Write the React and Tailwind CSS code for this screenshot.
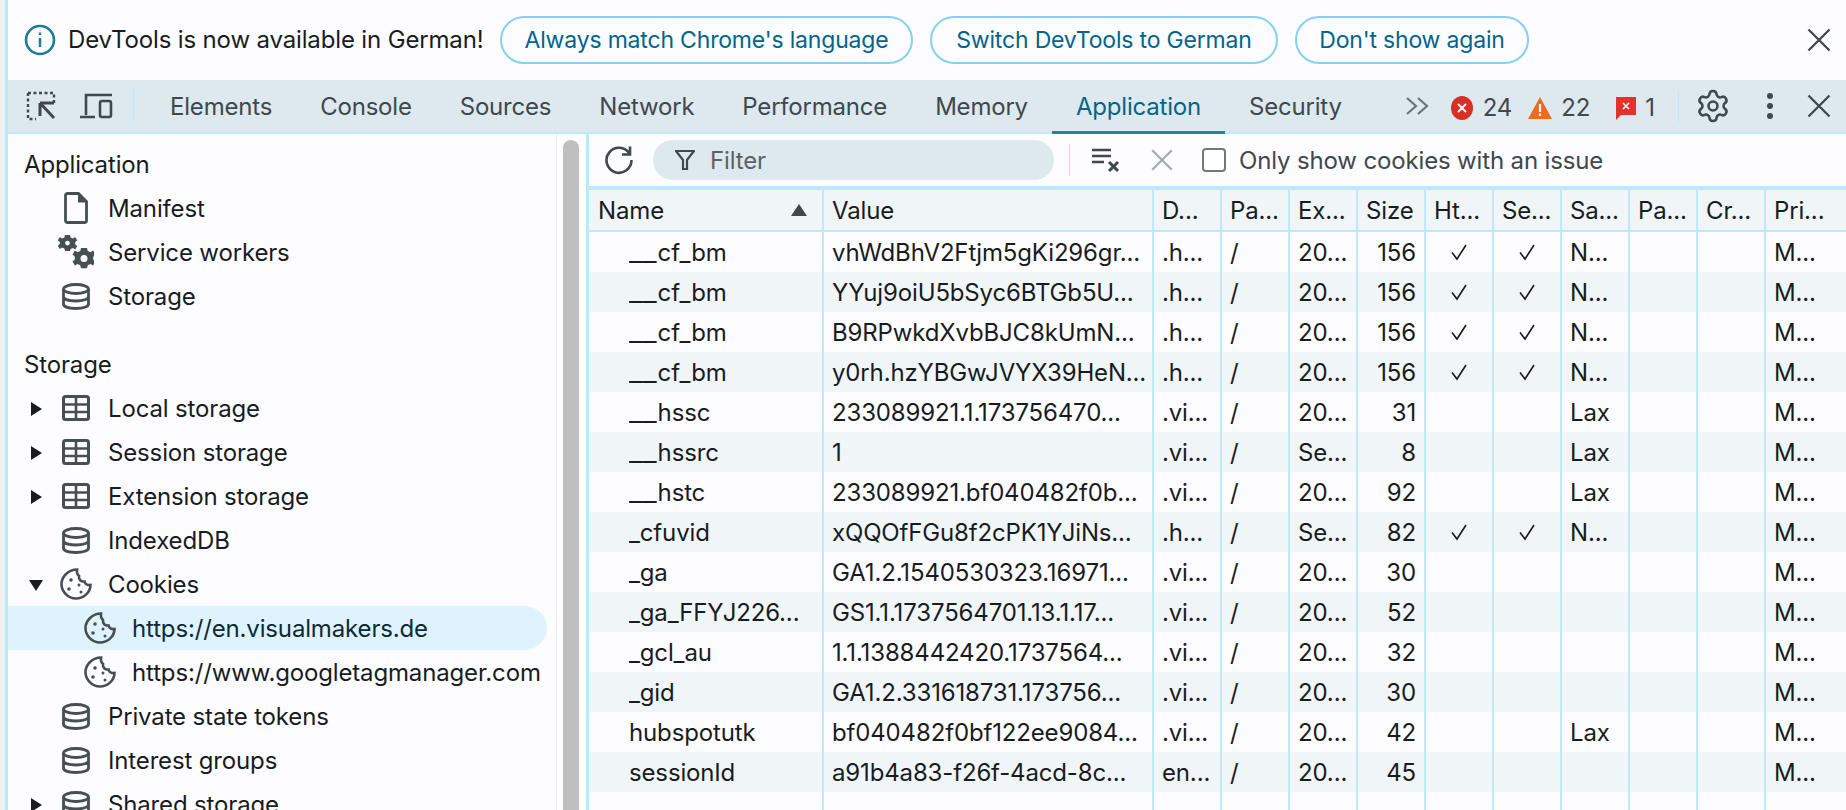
import { Settings } from "lucide-react";

const tabs = ["Elements", "Console", "Sources", "Network", "Performance", "Memory", "Application", "Security"];

const rows = [
    ["__cf_bm", "vhWdBhV2Ftjm5gKi296gr...", ".h...", "20...", "156", true, "N..."],
    ["__cf_bm", "YYuj9oiU5bSyc6BTGb5U...", ".h...", "20...", "156", true, "N..."],
    ["__cf_bm", "B9RPwkdXvbBJC8kUmN...", ".h...", "20...", "156", true, "N..."],
    ["__cf_bm", "y0rh.hzYBGwJVYX39HeN...", ".h...", "20...", "156", true, "N..."],
    ["__hssc", "233089921.1.173756470...", ".vi...", "20...", "31", false, "Lax"],
    ["__hssrc", "1", ".vi...", "Se...", "8", false, "Lax"],
    ["__hstc", "233089921.bf040482f0b...", ".vi...", "20...", "92", false, "Lax"],
    ["_cfuvid", "xQQOfFGu8f2cPK1YJiNs...", ".h...", "Se...", "82", true, "N..."],
    ["_ga", "GA1.2.1540530323.16971...", ".vi...", "20...", "30", false, ""],
    ["_ga_FFYJ226...", "GS1.1.1737564701.13.1.17...", ".vi...", "20...", "52", false, ""],
    ["_gcl_au", "1.1.1388442420.1737564...", ".vi...", "20...", "32", false, ""],
    ["_gid", "GA1.2.331618731.173756...", ".vi...", "20...", "30", false, ""],
    ["hubspotutk", "bf040482f0bf122ee9084...", ".vi...", "20...", "42", false, "Lax"],
    ["sessionId", "a91b4a83-f26f-4acd-8c...", "en...", "20...", "45", false, ""],
];

const gridCols = "grid grid-cols-[235px_330px_68px_68px_68px_68px_68px_68px_68px_68px_68px_1fr]";
const cell = "border-r-2 border-[#bee8fd] px-2 overflow-hidden whitespace-nowrap leading-[42px]";

/* ICONS */
const Close = ({ className }) => (
    <svg viewBox="0 0 24 24" className={className} fill="none" stroke="currentColor" strokeWidth="2">
        <path d="M3 3 21 21M21 3 3 21" />
    </svg>
);

const Caret = ({ open }) => (
    <svg viewBox="0 0 16 16" className="w-4 h-4 text-[#191c1e]" fill="currentColor">
        {open ? <path d="M1 3h14L8 14z" /> : <path d="M3 1l11 7-11 7z" />}
    </svg>
);

const Db = () => (
    <svg viewBox="0 0 28 27" className="w-7 h-[27px] text-[#474f53]" fill="none" stroke="currentColor" strokeWidth="2.8">
        <ellipse cx="14" cy="6" rx="12.500" ry="4.500" />
        <path d="M1.500 6v15c0 2.800 5.500 4.500 12.500 4.500s12.500-1.700 12.500-4.500V6M1.500 13.500c0 2.800 5.500 4.500 12.500 4.500s12.500-1.700 12.500-4.500" />
    </svg>
);

const Grid = () => (
    <svg viewBox="0 0 28 26" className="w-7 h-[26px] text-[#474f53]" fill="none" stroke="currentColor" strokeWidth="3">
        <rect x="1.500" y="1.500" width="25" height="23" rx="2" />
        <path d="M1.500 9.500h25M1.500 17h25M14 1.500v23" strokeWidth="2.600" />
    </svg>
);

const Cookie = () => (
    <svg viewBox="0 0 32 32" className="w-8 h-8 shrink-0 text-[#474f53]" fill="none" stroke="currentColor" strokeWidth="2.600">
        <path d="M17 1.500C8.500 1.500 1.500 8.500 1.500 16s6.500 14.500 14.500 14.500S30.500 24 30.500 17c-3 .5-5.500-1-6-3.500-3.500.5-6-2-5.500-5.500-1.500-1.500-2.500-4-2-6.500z" />
        <circle cx="11" cy="12" r="1.800" fill="currentColor" stroke="none" />
        <circle cx="9" cy="21" r="1.800" fill="currentColor" stroke="none" />
        <circle cx="19" cy="17" r="1.500" fill="currentColor" stroke="none" />
        <circle cx="21" cy="24" r="1.500" fill="currentColor" stroke="none" />
    </svg>
);

const ManifestIcon = () => (
    <svg viewBox="0 0 24 32" className="w-6 h-8 text-[#474f53]" fill="none" stroke="currentColor" strokeWidth="2.800">
        <path d="M1.500 3.500a2 2 0 0 1 2-2h11l8 8v19a2 2 0 0 1-2 2h-17a2 2 0 0 1-2-2z" />
        <path d="M14 1.500h1l7.500 8v1H14z" fill="currentColor" stroke="none" />
    </svg>
);

const GearsIcon = () => (
    <svg viewBox="0 0 36 34" className="w-9 h-[34px] shrink-0 text-[#474f53]" fill="currentColor">
        <path
            fillRule="evenodd"
            d="M7 0h5l.6 2.400 2.400 1 2.200-1.400 2 3.400-2 1.600v2.400l2 1.600-2 3.400-2.200-1.400-2.400 1L12 16H7l-.6-2.400-2.400-1-2.200 1.400-2-3.400 2-1.600V7l-2-1.600 2-3.400L4 3.400l2.400-1zM9.500 5.700a2.400 2.400 0 1 0 0 4.800 2.400 2.400 0 0 0 0-4.800z"
        />
        <path
            fillRule="evenodd"
            d="M23 13h6l.7 3 2.800 1.200 2.600-1.600 2.400 4-2.300 2.100v2.800l2.300 2.100-2.400 4-2.600-1.600-2.800 1.200-.7 3h-6l-.7-3-2.800-1.200-2.600 1.600-2.400-4 2.300-2.100v-2.800l-2.300-2.100 2.400-4 2.600 1.600 2.800-1.200zM26 20a3.500 3.500 0 1 0 0 7 3.500 3.500 0 0 0 0-7z"
        />
    </svg>
);

const CheckMark = () => (
    <svg viewBox="0 0 18 18" className="w-[18px] h-[18px] text-[#191c1e] mx-auto mt-[11px]" fill="none" stroke="currentColor" strokeWidth="1.600">
        <path d="M2 9.500 7 16 16 2" />
    </svg>
);

/* SIDEBAR ROW */
const SideRow = ({ caret, icon, label, indent, selected }) => (
    <div
        className={`flex items-center h-11 shrink-0 ${selected ? "bg-[#dff3fe] rounded-r-full text-[#0f2a37]" : ""} ${indent ? "pl-[76px]" : "pl-0"}`}
    >
        {!indent && <div className="w-[54px] pl-[20px] pt-px">{caret !== undefined && <Caret open={caret} />}</div>}
        <div className={`flex justify-center ${indent ? "w-8" : "w-7"}`}>{icon}</div>
        <span className={`whitespace-nowrap pt-px ${indent ? "ml-[16px]" : "ml-[18px]"}`}>{label}</span>
    </div>
);

const Pill = ({ children, width }) => (
    <button className={`h-[48px] rounded-full border-2 border-[#85d0f5] text-[#00658a] text-[23px] tracking-[-0.18px] text-center ${width}`}>
        {children}
    </button>
);

// the leading double underscore runs wider in the original font
const CookieName = ({ name }) =>
    name.startsWith("__") ? (
        <>
            <span className="inline-block origin-left scale-x-[1.27] mr-[7px]">__</span>
            {name.slice(2)}
        </>
    ) : (
        name
    );

export default function App() {
    return (
        <div className="w-[1846px] h-[810px] overflow-hidden flex bg-[#f0f0ee] pl-[5px] font-['Inter',sans-serif] text-[24px] tracking-[-0.15px] text-[#191c1e]">
            <div className="flex-1 flex flex-col border-l-[3px] border-[#bee8fd] bg-[#fdfcff] min-w-0">
                {/* INFOBAR */}
                <div className="h-20 shrink-0 flex items-center">
                    <svg viewBox="0 0 32 32" className="w-8 h-8 ml-4 text-[#1f7a9c]" fill="none" stroke="currentColor" strokeWidth="2.600">
                        <circle cx="16" cy="16" r="14" />
                        <path d="M16 14v9M16 8.500v2.500" strokeWidth="2.400" />
                    </svg>
                    <span className="ml-[12px] w-[432px] whitespace-nowrap pb-px">DevTools is now available in German!</span>
                    <div className="flex gap-[17px]">
                        <Pill width="w-[413px]">Always match Chrome's language</Pill>
                        <Pill width="w-[348px]">Switch DevTools to German</Pill>
                        <Pill width="w-[234px]">Don't show again</Pill>
                    </div>
                    <Close className="w-7 h-7 ml-[276px] text-[#40484c]" />
                </div>

                {/* TABS */}
                <div className="h-[54px] shrink-0 flex items-center bg-[#dde9ee] border-b-2 border-[#bee8fd] text-[#40484c]">
                    <svg viewBox="0 0 30 30" className="w-[30px] h-[30px] ml-[18px]" fill="none" stroke="currentColor" strokeWidth="2.400">
                        <path d="M2 2h26v10M2 2v26h8" strokeDasharray="3 2.500" />
                        <path d="M14 12h14M14 12v13M14.500 12.500 28 27" strokeWidth="3" />
                    </svg>
                    <svg viewBox="0 0 34 26" className="w-[34px] h-[26px] ml-[24px]" fill="none" stroke="currentColor" strokeWidth="2.600">
                        <path d="M6 22V2h26M0 24h15" />
                        <rect x="20" y="8" width="11" height="16" rx="2" />
                    </svg>
                    <div className="w-px h-8 bg-[#bee8fd] ml-[19px]" />
                    <div className="flex h-full ml-[12px]">
                        {tabs.map((t) => (
                            <div
                                key={t}
                                className={`h-[54px] px-6 leading-[54px] tracking-[-0.2px] whitespace-nowrap ${t === "Application" ? "text-[#00658a] border-b-[3px] border-[#26809f]" : ""}`}
                            >
                                {t}
                            </div>
                        ))}
                    </div>
                    <svg viewBox="0 0 24 20" className="w-6 h-5 ml-[39px] text-[#6c7478]" fill="none" stroke="currentColor" strokeWidth="2.200">
                        <path d="M2 2l9 8-9 8M13 2l9 8-9 8" />
                    </svg>
                    <div className="flex items-center pt-1">
                        <svg viewBox="0 0 22 24" className="w-[22px] h-6 ml-[22px]">
                            <ellipse cx="11" cy="12" rx="11" ry="12" fill="#d93025" />
                            <path d="M7 8l8 8M15 8l-8 8" stroke="#fff" strokeWidth="1.800" />
                        </svg>
                        <span className="ml-[10px]">24</span>
                        <svg viewBox="0 0 24 22" className="w-6 h-[22px] ml-[16px]">
                            <path d="M12 0 24 22H0z" fill="#ed6a22" />
                            <path d="M12 7v8M12 16.500v2.500" stroke="#fff" strokeWidth="2.200" />
                        </svg>
                        <span className="ml-[9px]">22</span>
                        <svg viewBox="0 0 22 24" className="w-[22px] h-6 ml-[25px]">
                            <path d="M1 1h20v18H6l-5 5z" fill="#e2322d" />
                            <path d="M8 7l6 6M14 7l-6 6" stroke="#fff" strokeWidth="1.600" />
                        </svg>
                        <span className="ml-[8px]">1</span>
                    </div>
                    <div className="w-px h-8 bg-[#bee8fd] ml-[23px]" />
                    <Settings className="w-9 h-9 ml-[16px]" strokeWidth={1.700} />
                    <svg viewBox="0 0 8 28" className="w-2 h-7 ml-[35px]" fill="currentColor">
                        <circle cx="4" cy="4" r="3" />
                        <circle cx="4" cy="14" r="3" />
                        <circle cx="4" cy="24" r="3" />
                    </svg>
                    <Close className="w-7 h-7 ml-[31px]" />
                </div>

                <div className="flex-1 flex min-h-0">
                    {/* SIDEBAR */}
                    <div className="w-[549px] shrink-0 pt-[8px] overflow-hidden border-r border-[#e9e9e9] pr-[9px]">
                        <div className="h-11 flex items-center pl-4 pt-px">Application</div>
                        <SideRow icon={<ManifestIcon />} label="Manifest" />
                        <SideRow icon={<GearsIcon />} label="Service workers" />
                        <SideRow icon={<Db />} label="Storage" />
                        <div className="h-11 mt-[24px] flex items-center pl-4 pt-px">Storage</div>
                        <SideRow caret={false} icon={<Grid />} label="Local storage" />
                        <SideRow caret={false} icon={<Grid />} label="Session storage" />
                        <SideRow caret={false} icon={<Grid />} label="Extension storage" />
                        <SideRow icon={<Db />} label="IndexedDB" />
                        <SideRow caret={true} icon={<Cookie />} label="Cookies" />
                        <SideRow indent selected icon={<Cookie />} label="https://en.visualmakers.de" />
                        <SideRow indent icon={<Cookie />} label="https://www.googletagmanager.com" />
                        <SideRow icon={<Db />} label="Private state tokens" />
                        <SideRow icon={<Db />} label="Interest groups" />
                        <SideRow caret={false} icon={<Db />} label="Shared storage" />
                    </div>

                    {/* SCROLLBAR */}
                    <div className="w-[29px] shrink-0 pt-[6px] pl-[6px]">
                        <div className="w-4 h-full bg-[#bfbfbf] rounded-t-full" />
                    </div>

                    {/* COOKIES PANE */}
                    <div className="flex-1 min-w-0 flex flex-col border-l-[3px] border-[#bee8fd] bg-[#fdfcff]">
                        <div className="h-[52px] shrink-0 flex items-center border-b-0 text-[#40484c]">
                            <svg viewBox="0 0 30 30" className="w-[30px] h-[30px] ml-[15px]" fill="none" stroke="currentColor" strokeWidth="2.600">
                                <path d="M25.500 8.500A12.500 12.500 0 1 0 27.500 15M26 1.500v8h-8" />
                            </svg>
                            <div className="w-[401px] h-10 rounded-full bg-[#dde9ee] ml-[19px] flex items-center pl-[22px]">
                                <svg viewBox="0 0 20 22" className="w-5 h-[22px]" fill="none" stroke="currentColor" strokeWidth="2.200">
                                    <path d="M1 2h18l-7 9v9H8v-9z" />
                                </svg>
                                <span className="ml-[15px] pt-px text-[#5a6367]">Filter</span>
                            </div>
                            <div className="w-px h-8 bg-[#bee8fd] ml-[15px]" />
                            <svg viewBox="0 0 30 26" className="w-[30px] h-[26px] ml-[21px]" fill="none" stroke="currentColor" strokeWidth="2.600">
                                <path d="M1 3h19M1 9h19M1 15h12" />
                                <path d="M18 15l9 9M27 15l-9 9" strokeWidth="3" />
                            </svg>
                            <Close className="w-[26px] h-[26px] ml-[28px] text-[#a4acb0]" />
                            <div className="w-6 h-6 rounded-[4px] border-2 border-[#6f787c] bg-white ml-[27px]" />
                            <span className="ml-[13px] pt-px whitespace-nowrap">Only show cookies with an issue</span>
                        </div>

                        {/* TABLE */}
                        <div className="flex-1 min-h-0 flex flex-col border-t-4 border-[#bee8fd] overflow-hidden">
                            <div className={`${gridCols} h-[42px] shrink-0 bg-[#f0f5f8] border-b-2 border-[#bee8fd]`}>
                                <div className={`${cell} pl-[9px] relative`}>
                                    Name
                                    <svg viewBox="0 0 16 12" className="w-4 h-3 absolute right-[15px] top-[14px] text-[#40484c]" fill="currentColor">
                                        <path d="M8 0l8 12H0z" />
                                    </svg>
                                </div>
                                {["Value", "D...", "Pa...", "Ex...", "Size", "Ht...", "Se...", "Sa...", "Pa...", "Cr..."].map((h, i) => (
                                    <div key={i} className={cell}>{h}</div>
                                ))}
                                <div className="px-2 leading-[42px] whitespace-nowrap">Pri...</div>
                            </div>
                            {rows.map((r, i) => (
                                <div key={i} className={`${gridCols} h-10 shrink-0 ${i % 2 === 1 ? "bg-[#f0f5f8]" : ""}`}>
                                    <div className={`${cell} pl-[40px]`}><CookieName name={r[0]} /></div>
                                    <div className={cell}>{r[1]}</div>
                                    <div className={cell}>{r[2]}</div>
                                    <div className={cell}>/</div>
                                    <div className={cell}>{r[3]}</div>
                                    <div className={`${cell} text-right pr-[8px]`}>{r[4]}</div>
                                    <div className={cell}>{r[5] && <CheckMark />}</div>
                                    <div className={cell}>{r[5] && <CheckMark />}</div>
                                    <div className={cell}>{r[6]}</div>
                                    <div className={cell} />
                                    <div className={cell} />
                                    <div className="px-2 leading-[42px] whitespace-nowrap">M...</div>
                                </div>
                            ))}
                            <div className={`${gridCols} flex-1`}>
                                {Array.from({ length: 11 }).map((_, i) => (
                                    <div key={i} className="border-r-2 border-[#bee8fd]" />
                                ))}
                                <div />
                            </div>
                        </div>
                    </div>
                </div>
            </div>
        </div>
    );
}
